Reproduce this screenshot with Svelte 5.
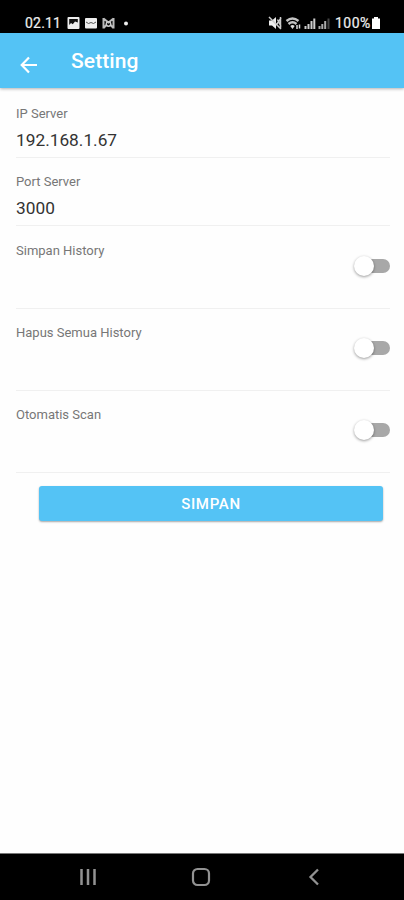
<script lang="ts">
  let ipServer = $state("192.168.1.67");
  let portServer = $state("3000");

  let options = $state([
    { label: "Simpan History", enabled: false },
    { label: "Hapus Semua History", enabled: false },
    { label: "Otomatis Scan", enabled: false },
  ]);
</script>

<div class="screen">
  <div class="status-bar">
    <span class="clock">02.11</span>
    <svg class="notifications" width="68" height="16" viewBox="0 0 68 16">
      <!-- picture -->
      <rect x="0.5" y="2" width="12" height="12" rx="1" fill="#eee" />
      <path d="M2.2 4h8.600v3.500L8 6.500 5.800 9.300 4 8 2.200 10z" fill="#111" />
      <!-- mail -->
      <rect x="18" y="3" width="12" height="10.500" rx="1" fill="#eee" />
      <path d="M19 7l2.500 1.500L24 7.500l2.500 1L29 7" fill="none" stroke="#555" />
      <!-- game launcher -->
      <path
        d="M36.500 3v10.500M46.500 3v10.500M36.500 3.500l5 4 5-4M36.500 13l3-3M46.500 13l-3-3"
        fill="none"
        stroke="#bbb"
        stroke-width="2"
      />
      <circle cx="41.500" cy="9" r="2.200" fill="none" stroke="#ccc" stroke-width="1.500" />
      <circle cx="59" cy="8.500" r="2" fill="#eee" />
    </svg>
    <div class="spacer"></div>
    <svg class="signals" width="64" height="16" viewBox="0 0 64 16">
      <!-- sound off -->
      <path d="M1 5.500h3L8 2v12L4 10.500H1z" fill="#eee" />
      <path d="M1 2l12 12M9.500 4.500l3.500 7M13 3l-4 6M12.500 2v11" fill="none" stroke="#ccc" stroke-width="1.500" />
      <!-- wifi -->
      <path
        d="M18.500 6q6-5 12 0M20.500 9q4-3.500 8 0"
        fill="none"
        stroke="#c4c4c4"
        stroke-width="2.400"
      />
      <path d="M22.300 11q2.200-1.800 4.400 0l-2.200 3z" fill="#ddd" />
      <path d="M29 10v4M31.500 9.500v4" stroke="#ddd" stroke-width="1.500" />
      <!-- mobile signal -->
      <path d="M37.500 11v3M40.500 9v5M43.500 6v8M46.300 3.500v10.500" stroke="#ccc" stroke-width="2" />
      <path d="M51.500 11v3M54.300 9v5M57.200 6v8" stroke="#aaa" stroke-width="2" />
      <path d="M60.500 3.500v10.500" stroke="#444" stroke-width="2" />
    </svg>
    <span class="battery-level">100%</span>
    <svg class="battery" width="10" height="14" viewBox="0 0 10 14">
      <path d="M3 1h4v1.500h2V13H1V2.500h2z" fill="#fff" />
    </svg>
  </div>

  <header class="toolbar">
    <button class="back" aria-label="Back">
      <svg width="18" height="18" viewBox="0 0 18 18">
        <path d="M9 1.500L1.700 9 9 16.500M1.700 9H17" fill="none" stroke="#fff" stroke-width="2.200" />
      </svg>
    </button>
    <h1>Setting</h1>
  </header>

  <main>
    <label class="field first">
      <span class="label">IP Server</span>
      <input type="text" bind:value={ipServer} />
    </label>
    <label class="field">
      <span class="label">Port Server</span>
      <input type="text" bind:value={portServer} />
    </label>

    {#each options as option}
      <div class="option">
        <span class="label">{option.label}</span>
        <button
          class="toggle"
          class:on={option.enabled}
          role="switch"
          aria-checked={option.enabled}
          aria-label={option.label}
          onclick={() => (option.enabled = !option.enabled)}
        >
          <span class="knob"></span>
        </button>
      </div>
    {/each}

    <button class="save">SIMPAN</button>
  </main>

  <nav class="nav-bar">
    <button aria-label="Recent apps">
      <svg width="20" height="20" viewBox="0 0 20 20">
        <path d="M3.500 2v16M10 2v16M16.500 2v16" stroke="#929292" stroke-width="2.500" />
      </svg>
    </button>
    <button aria-label="Home">
      <svg width="20" height="20" viewBox="0 0 20 20">
        <rect x="2" y="2" width="16" height="16" rx="4.500" fill="none" stroke="#929292" stroke-width="2.200" />
      </svg>
    </button>
    <button aria-label="Back">
      <svg width="20" height="20" viewBox="0 0 20 20">
        <path d="M14 2.500L6.500 10l7.500 7.500" fill="none" stroke="#929292" stroke-width="2.300" />
      </svg>
    </button>
  </nav>
</div>

<style>
  :global(body) {
    margin: 0;
    background: #fefefe;
  }

  .screen {
    display: flex;
    flex-direction: column;
    height: 900px;
    font-family: Roboto, sans-serif;
    background: #fefefe;
  }

  button {
    padding: 0;
    border: none;
    background: none;
    font-family: inherit;
  }

  svg {
    display: block;
    flex: none;
  }

  .status-bar {
    display: flex;
    align-items: center;
    box-sizing: border-box;
    height: 33px;
    padding: 13px 23px 0 25px;
    background: #000;
    color: #f0f0f0;
    font-size: 14px;
    line-height: 20px;
  }

  .clock {
    width: 42px;
    letter-spacing: 0.2px;
    -webkit-text-stroke: 0.2px;
  }

  .spacer {
    flex: 1;
  }

  .battery-level {
    width: 36px;
    margin-left: 3px;
    letter-spacing: 0.5px;
    -webkit-text-stroke: 0.2px;
  }

  .toolbar {
    display: flex;
    align-items: center;
    height: 55px;
    background: #54c3f5;
    box-shadow: 0 1px 3px rgba(0, 0, 0, 0.3);
  }

  .back {
    width: 18px;
    margin: 9px 33px 0 20px;
  }

  h1 {
    margin: 0;
    color: #fff;
    font-size: 21px;
    font-weight: 500;
    line-height: 26px;
    letter-spacing: 0.1px;
  }

  main {
    flex: 1;
    padding: 0 14px 0 16px;
  }

  .field {
    display: block;
    box-sizing: border-box;
    height: 68px;
    padding-top: 16px;
    border-bottom: 1px solid #f0f0f0;
  }

  .first {
    height: 70px;
    padding-top: 18px;
  }

  .label {
    display: block;
    color: #777;
    font-size: 13px;
    line-height: 16px;
  }

  input {
    display: block;
    width: 100%;
    height: 24px;
    margin-top: 6px;
    padding: 0;
    border: none;
    outline: none;
    background: none;
    color: #333;
    font-family: inherit;
    font-size: 17.300px;
  }

  .option {
    display: flex;
    justify-content: space-between;
    box-sizing: border-box;
    height: 82px;
    padding-top: 16px;
    border-bottom: 1px solid #f0f0f0;
  }

  .field + .option {
    height: 83px;
    padding-top: 17px;
  }

  .toggle {
    display: flex;
    align-items: center;
    width: 33px;
    height: 14px;
    margin-top: 16px;
    border-radius: 7px;
    background: #a8a8a8;
  }

  .knob {
    width: 20px;
    height: 20px;
    margin-left: -3px;
    border-radius: 50%;
    background: #fff;
    box-shadow: 0 1px 3px rgba(0, 0, 0, 0.4);
  }

  .on {
    justify-content: flex-end;
    background: #54c3f5;
  }

  .save {
    display: block;
    width: 344px;
    height: 35px;
    margin: 13px 0 0 23px;
    border-radius: 3px;
    background: #54c3f5;
    box-shadow: 0 1px 2px rgba(0, 0, 0, 0.35);
    color: #fff;
    font-size: 15px;
    font-weight: 500;
    letter-spacing: 0.7px;
  }

  .nav-bar {
    display: flex;
    justify-content: space-between;
    align-items: center;
    box-sizing: border-box;
    height: 47px;
    padding: 0 80px 0 78px;
    border-top: 1px solid #777;
    background: #000;
  }
</style>
